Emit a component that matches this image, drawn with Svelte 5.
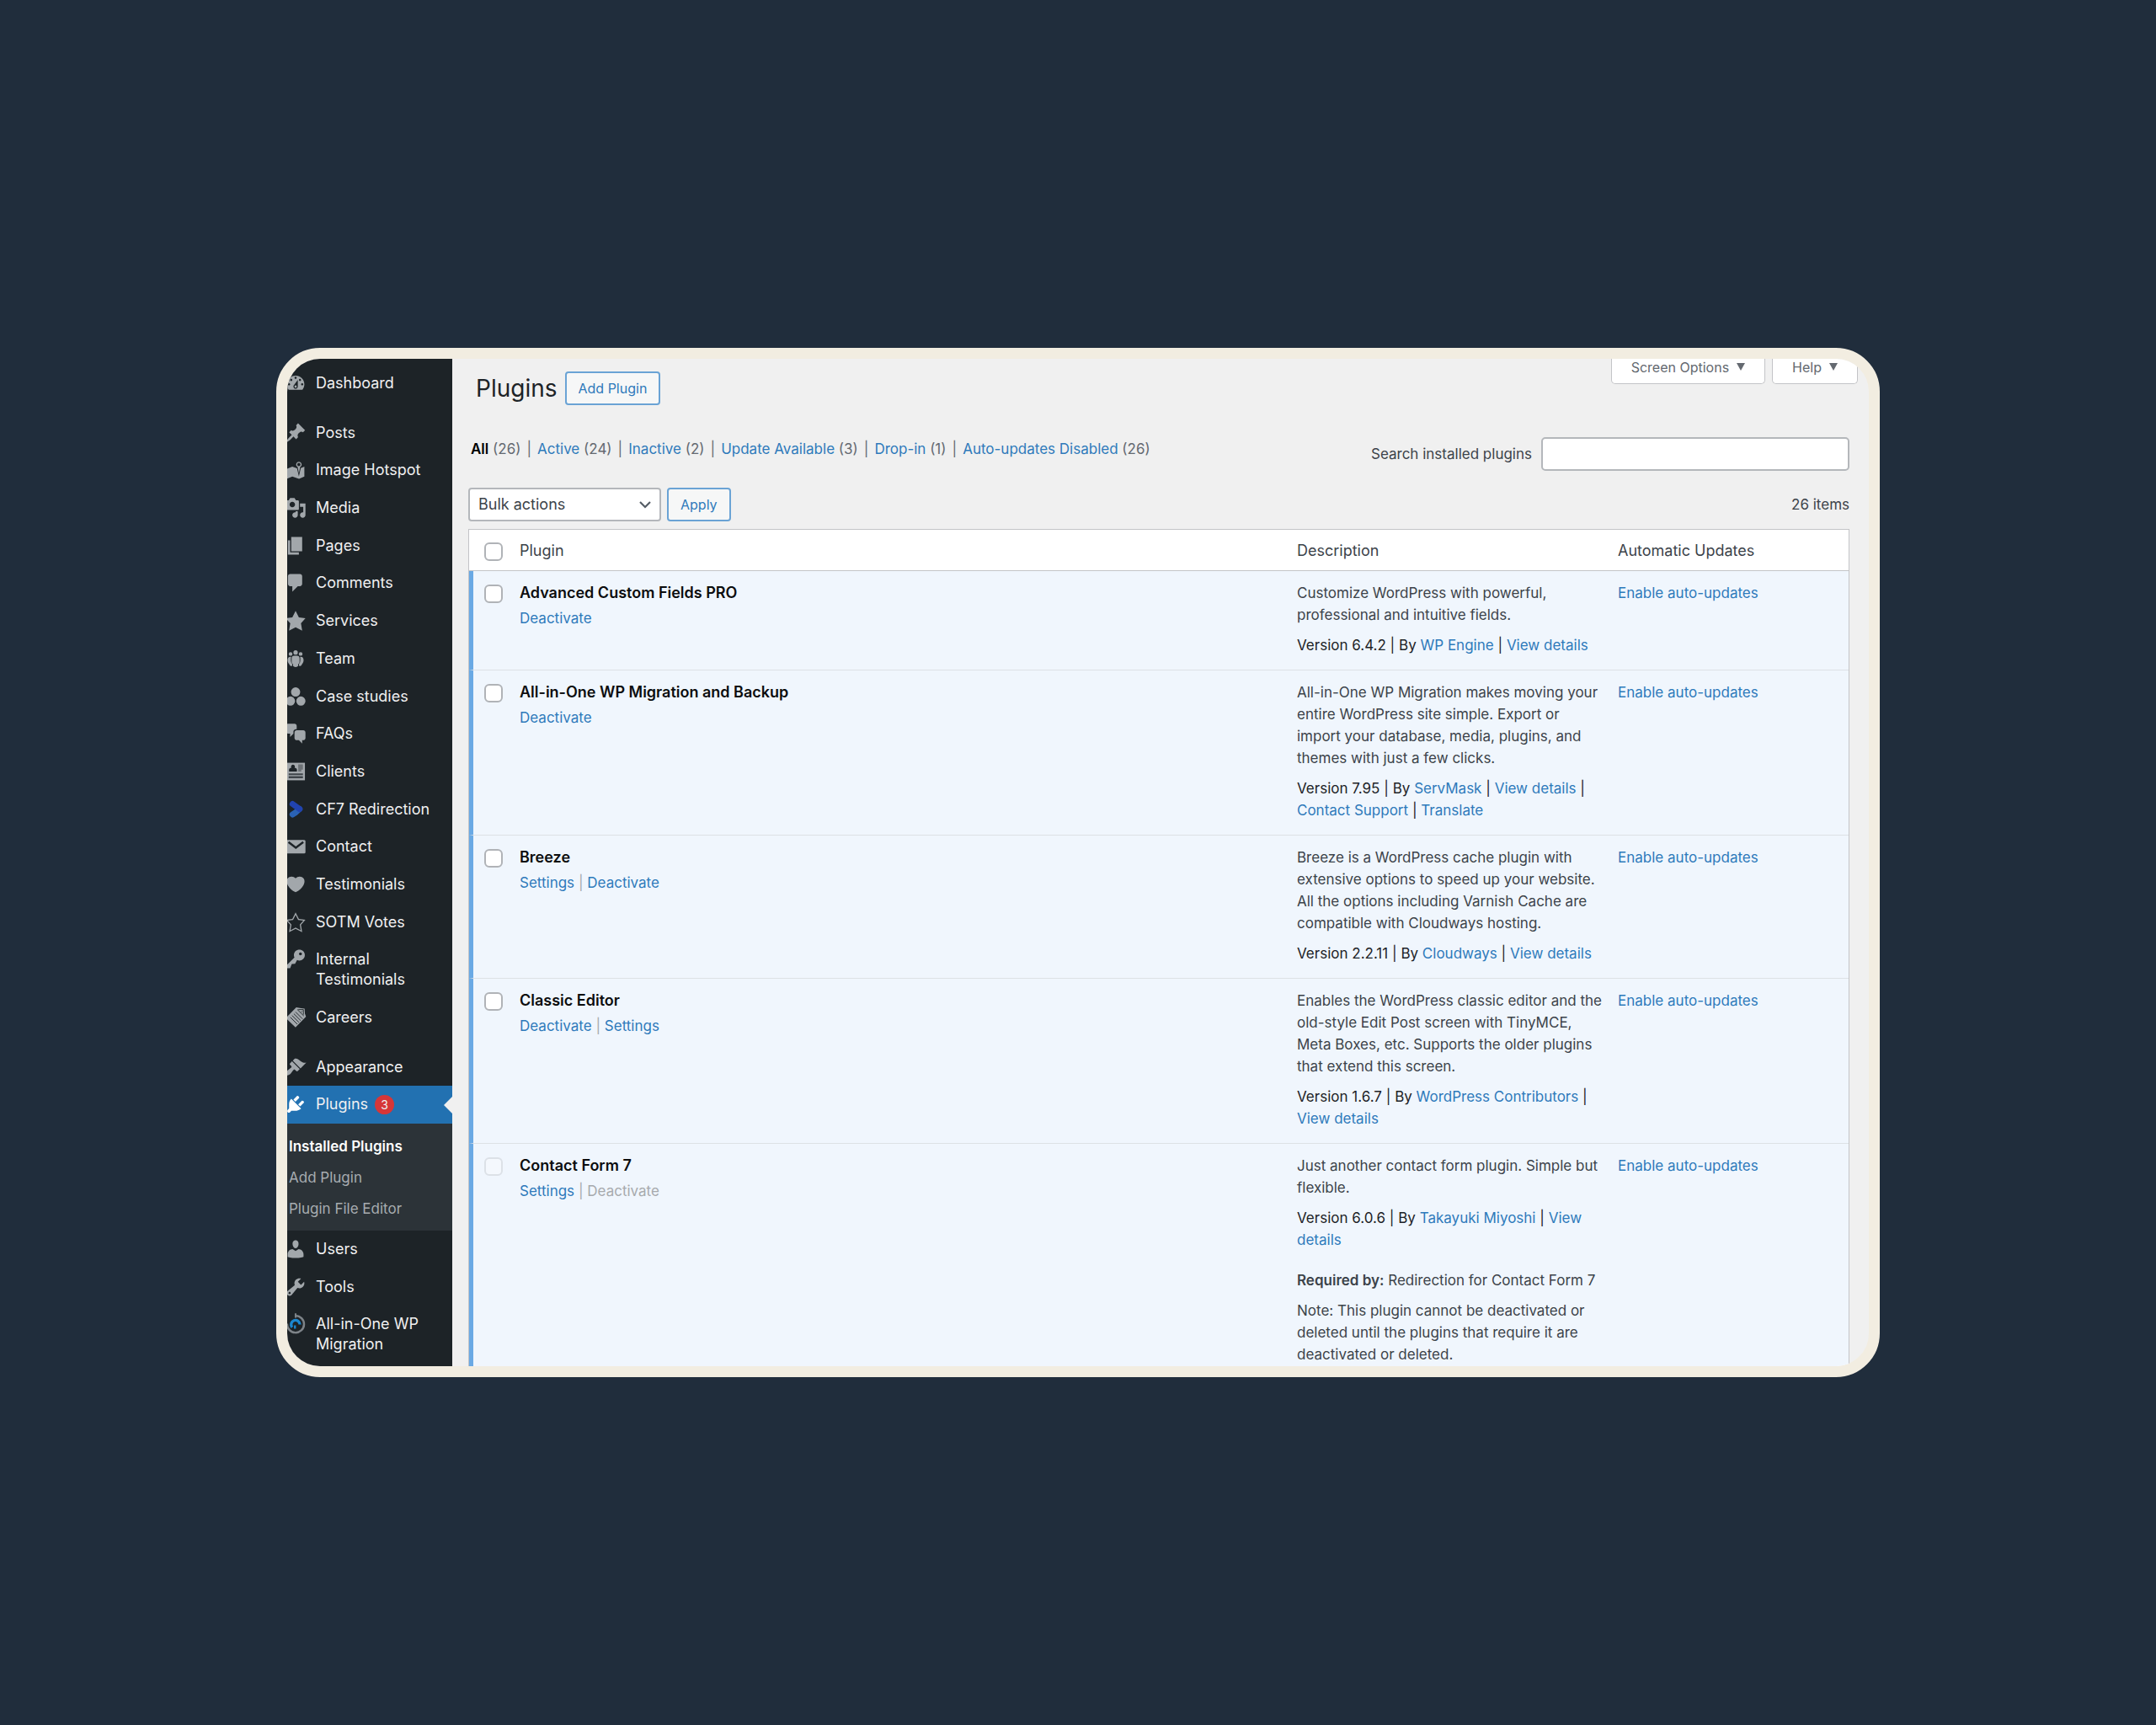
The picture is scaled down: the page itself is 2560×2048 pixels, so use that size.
<script>
  const icons = {
    dashboard:
      'M3.76 16h12.48c1.1-1.37 1.76-3.11 1.76-5 0-4.42-3.58-8-8-8s-8 3.58-8 8c0 1.89.66 3.63 1.76 5zM10 4c.55 0 1 .45 1 1s-.45 1-1 1-1-.45-1-1 .45-1 1-1zM6 6c.55 0 1 .45 1 1s-.45 1-1 1-1-.45-1-1 .45-1 1-1zm8 0c.55 0 1 .45 1 1s-.45 1-1 1-1-.45-1-1 .45-1 1-1zm-5.37 5.55L12 7v6c0 1.1-.9 2-2 2s-2-.9-2-2c0-.57.24-1.08.63-1.45zM4 10c.55 0 1 .45 1 1s-.45 1-1 1-1-.45-1-1 .45-1 1-1zm12 0c.55 0 1 .45 1 1s-.45 1-1 1-1-.45-1-1 .45-1 1-1zm-5 3c0-.55-.45-1-1-1s-1 .45-1 1 .45 1 1 1 1-.45 1-1z',
    pin: 'M10.44 3.02l1.82-1.82 6.36 6.35-1.83 1.82c-1.05-.68-2.48-.57-3.41.36l-.75.75c-.92.93-1.04 2.35-.35 3.41l-1.83 1.82-2.41-2.41-2.8 2.79c-.42.42-3.38 2.71-3.8 2.29s1.86-3.39 2.28-3.81l2.79-2.79L4.1 9.36l1.83-1.82c1.05.69 2.48.57 3.4-.36l.75-.75c.93-.92 1.05-2.35.36-3.41z',
    map: 'M13 13.14l1.17-5.94c.79-.43 1.33-1.25 1.33-2.2 0-1.38-1.12-2.5-2.5-2.5S10.5 3.62 10.5 5c0 .95.54 1.77 1.33 2.2zm0-9.64c.83 0 1.5.67 1.5 1.5s-.67 1.5-1.5 1.5-1.5-.67-1.5-1.5.67-1.5 1.5-1.5zm1.72 4.8L18 6.97v9L13.12 18 7 15.97l-5 2v-9l5-2 4.27 1.41 1.73 7.3z',
    media:
      'M13 11V4c0-.55-.45-1-1-1h-1.67L9 1H5L3.67 3H2c-.55 0-1 .45-1 1v7c0 .55.45 1 1 1h10c.55 0 1-.45 1-1zM7 4.5c1.38 0 2.5 1.12 2.5 2.5S8.38 9.5 7 9.5 4.5 8.38 4.5 7 5.62 4.5 7 4.5zM14 6h5v10.5c0 1.38-1.12 2.5-2.5 2.5S14 17.88 14 16.5s1.12-2.5 2.5-2.5c.17 0 .34.02.5.05V9h-3V6zm-4 8.05V13h2v3.5c0 1.38-1.12 2.5-2.5 2.5S7 17.88 7 16.5 8.12 14 9.5 14c.17 0 .34.02.5.05z',
    page: 'M6 15V2h10v13H6zm-1 1h8v2H3V5h2v11z',
    comment:
      'M5 2h9c1.1 0 2 .9 2 2v7c0 1.1-.9 2-2 2h-2l-5 5v-5H5c-1.1 0-2-.9-2-2V4c0-1.1.9-2 2-2z',
    star: 'M10 1l3 6 6 .75-4.12 4.62L16 19l-6-3-6 3 1.13-6.63L1 7.75 7 7z',
    starEmpty:
      'M10 1L7 7l-6 .75 4.13 4.62L4 19l6-3 6 3-1.12-6.63L19 7.75 13 7zm0 2.24l2.34 4.69 4.65.58-3.18 3.56.87 5.15L10 14.88l-4.68 2.34.87-5.15-3.18-3.56 4.65-.58z',
    team: 'M10 2.4a2 2 0 1 1 0 4 2 2 0 0 1 0-4zM5.4 4a1.7 1.7 0 1 1 0 3.4 1.7 1.7 0 0 1 0-3.4zM14.6 4a1.7 1.7 0 1 1 0 3.4 1.7 1.7 0 0 1 0-3.4zM8.6 7.4h2.8c1.3 0 2.2.8 2.2 2.2v3.2c0 1-.5 1.7-1.2 2.1v1.3c0 .8-1 1.4-2.4 1.4s-2.4-.6-2.4-1.4v-1.3c-.7-.4-1.2-1.1-1.2-2.1V9.6c0-1.4.9-2.2 2.2-2.2zM5.9 8.3c-.3 1.3-.3 4 .1 5.2.2.6.6 1 .9 1.3v1.8c-1.3.2-2.4-.3-2.5-1.3C3.3 14.3 2.7 13 2.7 11.4c0-2 .9-3.3 3.2-3.1zM14.1 8.3c.3 1.3.3 4-.1 5.2-.2.6-.6 1-.9 1.3v1.8c1.3.2 2.4-.3 2.5-1.3 1.1-1 1.7-2.3 1.7-3.9 0-2-.9-3.3-3.2-3.1z',
    circles:
      'M10 1.6a4.2 4.2 0 1 1 0 8.4 4.2 4.2 0 0 1 0-8.4zM5.3 9.9a4.2 4.2 0 1 1 0 8.4 4.2 4.2 0 0 1 0-8.4zM14.8 9.9a4.2 4.2 0 1 1 0 8.4 4.2 4.2 0 0 1 0-8.4z',
    chat: 'M11 6h-.82C9.07 6 8 7.2 8 8.16V10l-3 3v-3H3c-1.1 0-2-.9-2-2V3c0-1.1.9-2 2-2h6c1.1 0 2 .9 2 2v3zm0 1h6c1.1 0 2 .9 2 2v5c0 1.1-.9 2-2 2h-1v3l-3-3h-2c-1.1 0-2-.9-2-2V9c0-1.1.9-2 2-2z',
    heart:
      'M10 17.12c3.33-1.4 5.74-3.79 7.04-6.21 1.28-2.41 1.46-4.81.32-6.25-1.03-1.29-2.37-1.78-3.73-1.74s-2.68.63-3.63 1.46c-.95-.83-2.27-1.42-3.63-1.46s-2.7.45-3.73 1.74c-1.14 1.44-.96 3.84.34 6.25 1.28 2.42 3.69 4.81 7.02 6.21z',
    key: 'M16.95 2.58c1.96 1.95 1.96 5.12 0 7.07-1.51 1.51-3.75 1.84-5.59 1.01l-1.87 3.31-2.99.31L5 18H2l-1-2 7.95-7.69c-.92-1.87-.62-4.18.93-5.73 1.95-1.96 5.12-1.96 7.07 0zm-2.51 3.79c.74 0 1.33-.6 1.33-1.34 0-.73-.59-1.33-1.33-1.33-.73 0-1.33.6-1.33 1.33 0 .74.6 1.34 1.33 1.34z',
    brush:
      'M14.48 11.06L7.41 3.99l1.5-1.5c.5-.56 2.3-.47 3.51.32 1.21.8 1.43 1.28 2.91 2.1 1.18.64 2.45 1.26 4.45.85zm-.71.71L6.7 4.7 4.93 6.47c-.39.39-.39 1.02 0 1.41l1.06 1.06c.39.39.39 1.03 0 1.42-.6.6-1.43 1.11-2.21 1.69-.35.26-.7.53-1.01.84C1.43 14.23.4 16.08 1.4 17.07c.99 1 2.84-.03 4.18-1.36.31-.31.58-.66.85-1.02.57-.78 1.08-1.61 1.69-2.21.39-.39 1.02-.39 1.41 0l1.06 1.06c.39.39 1.02.39 1.41 0z',
    plug: 'M13.11 4.36L9.87 7.6 8 5.73l3.24-3.24c.35-.34 1.05-.2 1.56.32.52.51.66 1.21.31 1.55zm-8 1.77l.91-1.12 9.01 9.01-1.19.84c-.71.71-2.63 1.16-3.82 1.16H6.14L4.9 17.26c-.59.59-1.54.59-2.12 0-.59-.58-.59-1.53 0-2.12l1.24-1.24v-3.88c0-1.13.4-3.19 1.09-3.89zm7.26 3.97l3.24-3.24c.34-.35 1.04-.21 1.55.31.52.51.66 1.21.31 1.55l-3.24 3.25z',
    user: 'M10 9.25c-2.27 0-2.73-3.44-2.73-3.44C7 4.02 7.82 2 9.97 2c2.16 0 2.98 2.02 2.71 3.81 0 0-.41 3.44-2.68 3.44zm0 2.57L12.72 10c2.39 0 4.52 2.33 4.52 4.53v2.49s-3.65 1.13-7.24 1.13c-3.65 0-7.24-1.13-7.24-1.13v-2.49c0-2.25 1.94-4.48 4.47-4.48z',
    wrench:
      'M16.68 9.77c-1.34 1.34-3.3 1.67-4.95.99l-5.41 6.52c-.99.99-2.59.99-3.58 0s-.99-2.59 0-3.57l6.52-5.42c-.68-1.65-.35-3.61.99-4.95 1.28-1.28 3.12-1.62 4.72-1.06l-2.89 2.89 2.82 2.82 2.86-2.87c.53 1.58.18 3.39-1.08 4.65zM3.81 16.21c.4.39 1.04.39 1.43 0 .4-.4.4-1.04 0-1.43-.39-.4-1.03-.4-1.43 0-.39.39-.39 1.03 0 1.43z'
  };

  const menu = [
    { label: 'Dashboard', icon: 'dashboard' },
    { separator: true },
    { label: 'Posts', icon: 'pin' },
    { label: 'Image Hotspot', icon: 'map' },
    { label: 'Media', icon: 'media' },
    { label: 'Pages', icon: 'page' },
    { label: 'Comments', icon: 'comment' },
    { label: 'Services', icon: 'star' },
    { label: 'Team', icon: 'team' },
    { label: 'Case studies', icon: 'circles' },
    { label: 'FAQs', icon: 'chat' },
    { label: 'Clients', icon: 'id' },
    { label: 'CF7 Redirection', icon: 'redirect' },
    { label: 'Contact', icon: 'email' },
    { label: 'Testimonials', icon: 'heart' },
    { label: 'SOTM Votes', icon: 'starEmpty' },
    { label: 'Internal Testimonials', icon: 'key' },
    { label: 'Careers', icon: 'tickets' },
    { separator: true },
    { label: 'Appearance', icon: 'brush' },
    {
      label: 'Plugins',
      icon: 'plug',
      count: 3,
      submenu: ['Installed Plugins', 'Add Plugin', 'Plugin File Editor']
    },
    { label: 'Users', icon: 'user' },
    { label: 'Tools', icon: 'wrench' },
    { label: 'All-in-One WP Migration', icon: 'migration' }
  ];

  const filters = [
    { label: 'All', count: 26 },
    { label: 'Active', count: 24 },
    { label: 'Inactive', count: 2 },
    { label: 'Update Available', count: 3 },
    { label: 'Drop-in', count: 1 },
    { label: 'Auto-updates Disabled', count: 26 }
  ];

  const plugins = [
    {
      name: 'Advanced Custom Fields PRO',
      actions: ['Deactivate'],
      description: 'Customize WordPress with powerful, professional and intuitive fields.',
      version: '6.4.2',
      links: ['WP Engine', 'View details']
    },
    {
      name: 'All-in-One WP Migration and Backup',
      actions: ['Deactivate'],
      description:
        'All-in-One WP Migration makes moving your entire WordPress site simple. Export or import your database, media, plugins, and themes with just a few clicks.',
      version: '7.95',
      links: ['ServMask', 'View details', 'Contact Support', 'Translate']
    },
    {
      name: 'Breeze',
      actions: ['Settings', 'Deactivate'],
      description:
        'Breeze is a WordPress cache plugin with extensive options to speed up your website. All the options including Varnish Cache are compatible with Cloudways hosting.',
      version: '2.2.11',
      links: ['Cloudways', 'View details']
    },
    {
      name: 'Classic Editor',
      actions: ['Deactivate', 'Settings'],
      description:
        'Enables the WordPress classic editor and the old-style Edit Post screen with TinyMCE, Meta Boxes, etc. Supports the older plugins that extend this screen.',
      version: '1.6.7',
      links: ['WordPress Contributors', 'View details']
    },
    {
      name: 'Contact Form 7',
      actions: ['Settings', 'Deactivate'],
      description: 'Just another contact form plugin. Simple but flexible.',
      version: '6.0.6',
      links: ['Takayuki Miyoshi', 'View details'],
      requiredBy: 'Redirection for Contact Form 7'
    }
  ];

  let search = $state('');
</script>

{#snippet icon(name)}
  <svg class="icon" viewBox="0 0 20 20" fill="currentColor" aria-hidden="true">
    {#if name === 'id'}
      <path d="M1.5 2h17v16h-17z" />
      <path fill="#1d2327" d="M4 10V8.2c0-.9 1-1.5 2.1-1.6A2 2 0 0 1 7.6 3.6a2 2 0 0 1 1.5 3c1.1.1 2.1.7 2.1 1.6V10z" />
      <path fill="#6d7276" d="M12.4 3.5h4.3v4.7h-1.5V10h-2.8z" />
      <path fill="#3f454a" d="M3.7 11.8h13v1.4h-13zM3.7 14.3h13v1.8h-13z" />
    {:else if name === 'redirect'}
      <g fill="none" stroke-width="5.4" stroke-linejoin="round" stroke-linecap="round">
        <path stroke="#2a62b4" d="M7.2 14.6l2.4-1.5 4-3.5" />
        <path stroke="#2143b0" d="M7.2 5l6.4 4.6" />
      </g>
    {:else if name === 'email'}
      <rect x="1.5" y="4" width="17.5" height="12.3" rx="1.2" />
      <path fill="none" stroke="#1d2327" stroke-width="1.9" d="M3.5 6l6.7 5.2L17 6" />
    {:else if name === 'tickets'}
      <path d="M10.6.8l4.4.7 3.2.4.3 4.6 1 2.8-9.6 9.7L1 10.5z" />
      <g fill="none" stroke="#1d2327" stroke-width=".7">
        <path d="M11.5 2.6l6 6M12.5 2.8h4.6v4.6M15 5.2l1-1" />
        <path d="M10 5l6.3 6.3M8.4 6.6l6.3 6.3M6.8 8.2l6.3 6.3M5.2 9.8l6.3 6.3" />
      </g>
    {:else if name === 'migration'}
      <g fill="none">
        <path stroke="#7d8388" stroke-width="1.9" d="M10 2.4a7.7 7.7 0 1 1-7.7 7.2" />
        <path stroke="#7d8388" stroke-width="1.6" d="M10 .2v4" />
        <path stroke="#1b87d0" stroke-width="2.6" d="M6.8 13a4 4 0 1 1 7.1-2.6" />
        <path stroke="#1b87d0" stroke-width="1.8" d="M9.4 11.2v3" />
      </g>
    {:else}
      <path fill-rule="evenodd" d={icons[name]} />
    {/if}
  </svg>
{/snippet}

<main class="stage">
  <div class="window">
    <nav class="sidebar" aria-label="Main menu">
      <ul class="menu">
        {#each menu as item}
          {#if item.separator}
            <li class="separator"></li>
          {:else}
            <li class="menu-item" class:current={item.submenu}>
              <a href="#top">
                {@render icon(item.icon)}
                <span>{item.label}</span>
                {#if item.count}<span class="badge">{item.count}</span>{/if}
              </a>
            </li>
            {#if item.submenu}
              <li>
                <ul class="submenu">
                  {#each item.submenu as sub, i}
                    <li><a href="#top" class:active={i === 0}>{sub}</a></li>
                  {/each}
                </ul>
              </li>
            {/if}
          {/if}
        {/each}
      </ul>
    </nav>

    <section class="content">
      <header class="page-head">
        <div class="title">
          <h1>Plugins</h1>
          <button class="button" type="button">Add Plugin</button>
        </div>
        <div class="screen-meta">
          <button type="button">Screen Options <span class="caret"></span></button>
          <button type="button">Help <span class="caret"></span></button>
        </div>
      </header>

      <div class="filter-row">
        <ul class="filters">
          {#each filters as filter, i}
            <li>
              <a href="#top" class:active={i === 0}>{filter.label}</a>
              <span>({filter.count})</span>
            </li>
          {/each}
        </ul>
        <div class="search">
          <label for="plugin-search">Search installed plugins</label>
          <input id="plugin-search" type="search" bind:value={search} />
        </div>
      </div>

      <div class="tablenav">
        <select aria-label="Select bulk action">
          <option>Bulk actions</option>
        </select>
        <button class="button" type="button">Apply</button>
        <span class="total">26 items</span>
      </div>

      <table>
        <colgroup>
          <col class="col-check" />
          <col />
          <col class="col-description" />
          <col class="col-updates" />
        </colgroup>
        <thead>
          <tr>
            <td class="check"><input type="checkbox" aria-label="Select All" /></td>
            <th scope="col">Plugin</th>
            <th scope="col">Description</th>
            <th scope="col">Automatic Updates</th>
          </tr>
        </thead>
        <tbody>
          {#each plugins as plugin}
            <tr>
              <td class="check">
                <input type="checkbox" aria-label="Select {plugin.name}" disabled={!!plugin.requiredBy} />
              </td>
              <td>
                <strong class="name">{plugin.name}</strong>
                <div class="actions">
                  {#each plugin.actions as action, i}
                    {#if i > 0}<span>{' | '}</span>{/if}
                    {#if plugin.requiredBy && action === 'Deactivate'}
                      <span>{action}</span>
                    {:else}
                      <a href="#top">{action}</a>
                    {/if}
                  {/each}
                </div>
              </td>
              <td class="description">
                <p>{plugin.description}</p>
                <p class="meta">
                  Version {plugin.version} | By
                  {#each plugin.links as link, i}{#if i > 0}{' | '}{/if}<a href="#top">{link}</a>{/each}
                </p>
                {#if plugin.requiredBy}
                  <div class="requires">
                    <p><strong>Required by:</strong> {plugin.requiredBy}</p>
                    <p>Note: This plugin cannot be deactivated or deleted until the plugins that require it are deactivated or deleted.</p>
                  </div>
                {/if}
              </td>
              <td><a href="#top">Enable auto-updates</a></td>
            </tr>
          {/each}
        </tbody>
      </table>
    </section>
  </div>
</main>

<style>
  :global(body) {
    margin: 0;
    background: #202d3c;
  }

  .stage {
    box-sizing: border-box;
    height: 100vh;
    padding: 413px 328px;
    font-family: Inter, "Liberation Sans", sans-serif;
    font-size: 17px;
    line-height: 26px;
    color: #3c434a;
  }

  .window {
    box-sizing: border-box;
    display: flex;
    height: 100%;
    overflow: hidden;
    border: 13px solid #f2ede1;
    border-radius: 52px;
    background: #f0f0f0;
  }

  a {
    color: #2e7abb;
    text-decoration: none;
  }

  ul {
    margin: 0;
    padding: 0;
    list-style: none;
  }

  button,
  input,
  select {
    box-sizing: border-box;
    margin: 0;
    font: inherit;
  }

  /* sidebar */
  .sidebar {
    flex: 0 0 196px;
    background: #1d2327;
  }

  .menu {
    box-sizing: border-box;
    display: flex;
    flex-direction: column;
    height: 100%;
    padding: 7px 0 3px;
  }

  .separator {
    flex: 0 0 14px;
  }

  .menu-item {
    display: flex;
    flex: 1 0 auto;
  }

  .menu-item a {
    display: flex;
    flex: 1;
    align-items: flex-start;
    padding: 10px 12px 10px 0;
    font-size: 18px;
    line-height: 24px;
    color: #f0f0f1;
  }

  .icon {
    flex: none;
    width: 26px;
    height: 26px;
    margin: -1px 11px -1px -3px;
    color: #a2a7ab;
  }

  .current {
    position: relative;
    background: #2271b1;
  }

  .current .icon {
    color: #fff;
  }

  .current::after {
    content: '';
    position: absolute;
    top: 50%;
    right: 0;
    margin-top: -10px;
    border: 10px solid transparent;
    border-left: 0;
    border-right-color: #f0f0f0;
  }

  .badge {
    width: 23px;
    height: 23px;
    margin: 1px 0 0 8px;
    border-radius: 50%;
    background: #d63638;
    font-size: 14px;
    line-height: 23px;
    text-align: center;
  }

  .submenu {
    padding: 9px 0 8px;
    background: #2c3338;
  }

  .submenu a {
    display: block;
    padding: 5px 2px;
    color: #a7acb0;
  }

  .submenu li + li {
    margin-top: 1px;
  }

  .submenu .active {
    font-weight: 600;
    color: #fff;
  }

  /* content */
  .content {
    flex: 1;
    min-width: 0;
    padding: 0 23px 0 19px;
  }

  .page-head {
    display: flex;
    justify-content: space-between;
    align-items: flex-start;
  }

  .title {
    display: flex;
    align-items: center;
    gap: 9px;
    padding: 15px 0 0 9px;
  }

  h1 {
    margin: 0;
    font-size: 28px;
    font-weight: 400;
    line-height: 40px;
    color: #1d2327;
  }

  .button {
    height: 40px;
    padding: 0 14px;
    border: 2px solid #6aa3d5;
    border-radius: 4px;
    background: #f6f7f7;
    font-size: 16px;
    color: #2e7abb;
  }

  .screen-meta {
    display: flex;
    gap: 8px;
    margin-right: -10px;
  }

  .screen-meta button {
    display: flex;
    align-items: center;
    gap: 9px;
    height: 30px;
    padding: 0 23px 10px;
    border: 1px solid #c3c4c7;
    border-top: 0;
    border-radius: 0 0 5px 5px;
    background: #fff;
    font-size: 16px;
    color: #646970;
  }

  .caret {
    border: 5px solid transparent;
    border-top: 9px solid #646970;
    border-bottom: 0;
  }

  .filter-row {
    display: flex;
    justify-content: space-between;
    align-items: flex-start;
    margin: 38px 0 20px;
  }

  .filters {
    display: flex;
    padding-left: 3px;
    line-height: 28px;
    color: #646970;
  }

  .filters li + li::before {
    content: '|';
    margin: 0 7px;
  }

  .filters .active {
    font-weight: 600;
    color: #000;
  }

  .search {
    display: flex;
    align-items: center;
    gap: 11px;
  }

  .search input {
    width: 366px;
    height: 40px;
    padding: 0 10px;
    border: 2px solid #b4b7bb;
    border-radius: 5px;
    background: #fff;
  }

  .tablenav {
    display: flex;
    align-items: center;
    gap: 7px;
    margin-bottom: 9px;
  }

  select {
    width: 229px;
    height: 40px;
    padding: 0 32px 0 10px;
    border: 2px solid #b4b7bb;
    border-radius: 4px;
    appearance: none;
    background: #fff
      url("data:image/svg+xml,%3Csvg xmlns='http://www.w3.org/2000/svg' viewBox='0 0 16 10'%3E%3Cpath d='M2 2l6 6 6-6' fill='none' stroke='%23555d66' stroke-width='2.2'/%3E%3C/svg%3E")
      no-repeat right 9px center / 16px 10px;
    font-size: 18px;
    color: #3c434a;
  }

  .total {
    margin-left: auto;
  }

  table {
    width: 100%;
    table-layout: fixed;
    border: 1px solid #c3c4c7;
    border-spacing: 0;
    background: #fff;
  }

  .col-check {
    width: 48px;
  }

  .col-description {
    width: 381px;
  }

  .col-updates {
    width: 286px;
  }

  td,
  th {
    padding: 13px 12px 16px;
    text-align: left;
    vertical-align: top;
    font-weight: 400;
  }

  thead td,
  thead th {
    padding-top: 12px;
    padding-bottom: 10px;
    border-bottom: 1px solid #c3c4c7;
  }

  thead th {
    font-size: 18px;
  }

  tbody td {
    background: #f0f6fd;
  }

  tbody tr + tr td {
    border-top: 1px solid #dde1e5;
  }

  .description {
    padding-right: 1px;
  }

  .check {
    padding-right: 0;
    padding-left: 18px;
  }

  tbody .check {
    padding-left: 13px;
    border-left: 5px solid #6aa9e4;
  }

  .check input {
    display: block;
    width: 22px;
    height: 22px;
    margin-top: 3px;
    border: 2px solid #b0b3b7;
    border-radius: 6px;
    appearance: none;
    background: #fff;
  }

  .check input:disabled {
    opacity: 0.3;
  }

  .name {
    display: block;
    font-size: 18px;
    font-weight: 600;
    color: #0c0d0e;
  }

  .actions {
    margin-top: 4px;
    color: #a7aaad;
  }

  p {
    margin: 0;
  }

  p + p,
  .meta {
    margin-top: 10px;
  }

  .meta {
    color: #1d2327;
  }

  .requires {
    margin-top: 22px;
  }

  .requires strong {
    font-weight: 600;
  }
</style>
